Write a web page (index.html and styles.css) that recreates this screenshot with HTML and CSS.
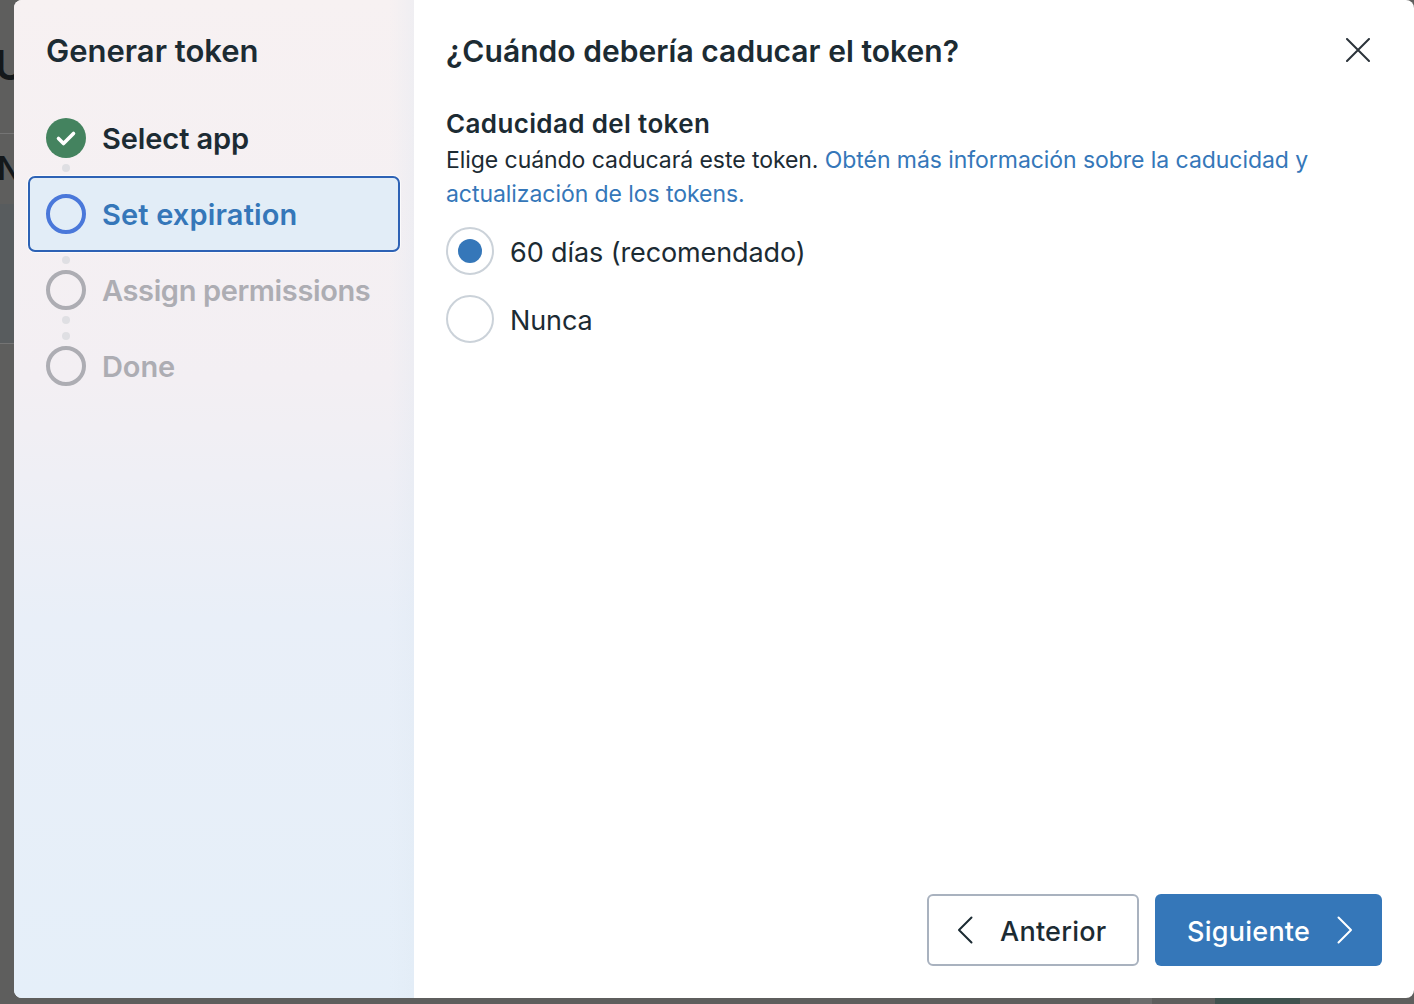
FILE: index.html
```html
<!DOCTYPE html>
<html lang="es">
<head>
<meta charset="utf-8">
<title>Generar token</title>
<link rel="stylesheet" href="styles.css">
</head>
<body>
<div class="backdrop">
  <span class="bg-band"></span>
  <span class="bg-letter bg-u">U</span>
  <span class="bg-letter bg-n">N</span>
  <span class="bg-line bg-line-1"></span>
  <span class="bg-line bg-line-3"></span>
  <span class="bg-patch bg-patch-1"></span>
  <span class="bg-patch bg-patch-2"></span>
</div>
<div class="modal">
  <aside class="side">
    <h2 class="side-title">Generar token</h2>
    <ol class="steps">
      <li class="step step-done">
        <svg class="step-icon" viewBox="0 0 40 40"><circle cx="20" cy="20" r="20" fill="#44835f"/><path d="M12.5 20.5l5 5 10-10" fill="none" stroke="#fff" stroke-width="3.6" stroke-linecap="round" stroke-linejoin="round"/></svg>
        <span>Select app</span>
        <i class="dot dot-after"></i>
      </li>
      <li class="step step-active">
        <span class="ring"></span>
        <span class="label-expiration">Set expiration</span>
      </li>
      <li class="step step-todo">
        <i class="dot dot-before"></i>
        <span class="ring"></span>
        <span class="label-assign">Assign permissions</span>
        <i class="dot dot-after"></i>
      </li>
      <li class="step step-todo">
        <i class="dot dot-before"></i>
        <span class="ring"></span>
        <span>Done</span>
      </li>
    </ol>
  </aside>
  <main class="main">
    <header class="main-head">
      <h1 class="main-title">¿Cuándo debería caducar el token?</h1>
      <svg class="close" viewBox="0 0 24 24"><path d="M1 1l22 22M23 1L1 23" fill="none" stroke="#2b333a" stroke-width="2" stroke-linecap="round"/></svg>
    </header>
    <section class="content">
      <h3 class="section-title">Caducidad del token</h3>
      <p class="section-text">Elige cuándo caducará este token. <a href="#">Obtén más información sobre la caducidad y actualización de los tokens.</a></p>
      <div class="radios">
        <label class="radio"><span class="radio-mark radio-on"></span><span class="radio-text">60 días (recomendado)</span></label>
        <label class="radio"><span class="radio-mark"></span><span class="radio-text">Nunca</span></label>
      </div>
    </section>
    <footer class="actions">
      <button class="btn btn-secondary"><svg class="chev" viewBox="0 0 16 28"><path d="M14.5 1.5L2 14l12.5 12.5" fill="none" stroke="currentColor" stroke-width="2" stroke-linecap="round" stroke-linejoin="round"/></svg><span>Anterior</span></button>
      <button class="btn btn-primary"><span>Siguiente</span><svg class="chev" viewBox="0 0 16 28"><path d="M1.5 1.5L14 14 1.5 26.5" fill="none" stroke="currentColor" stroke-width="2" stroke-linecap="round" stroke-linejoin="round"/></svg></button>
    </footer>
  </main>
</div>
</body>
</html>
```
FILE: styles.css
```css
* { box-sizing: border-box; }
html, body { margin: 0; height: 100%; overflow: hidden; }
body {
  background: #5e5e5d;
  font-family: Inter, "Noto Sans", "Liberation Sans", sans-serif;
  color: #1c2b33;
  position: relative;
  padding-left: 14px;
}
.backdrop { position: absolute; inset: 0; overflow: hidden; }
.bg-band { position: absolute; left: 0; top: 204px; width: 14px; height: 139px; background: #585c5e; }
.bg-letter { position: absolute; font-weight: 600; color: #14181b; }
.bg-u { left: -5px; top: 41px; font-size: 41px; line-height: 48px; }
.bg-n { left: -3px; top: 150px; font-size: 32px; line-height: 38px; }
.bg-line { position: absolute; left: 0; width: 14px; height: 1px; background: #747474; }
.bg-line-1 { top: 133px; }
.bg-line-3 { top: 343px; }
.bg-patch { position: absolute; top: 998px; height: 6px; }
.bg-patch-1 { left: 1130px; width: 22px; background: #6c6c6c; }
.bg-patch-2 { left: 1215px; width: 85px; background: #40524f; }
.modal {
  position: relative;
  display: flex;
  width: 1400px;
  height: 998px;
  background: #fff;
  border-radius: 8px;
  overflow: hidden;
}
.side {
  width: 400px;
  flex: none;
  padding: 0 14px;
  background:
    linear-gradient(90deg, rgba(225, 232, 242, 0) 94%, rgba(222, 232, 242, 0.3) 100%),
    linear-gradient(180deg, #f7f1f2 0%, #f3eff3 38%, #e9eff8 62%, #e5eff9 100%);
}
.side-title { margin: 34px 0 0 18px; font-size: 31px; line-height: 34px; font-weight: 600; letter-spacing: 0; }
.steps { list-style: none; margin: 32px 0 0; padding: 0; }
.step {
  position: relative;
  display: flex;
  align-items: center;
  gap: 16px;
  height: 76px;
  padding-left: 18px;
  font-size: 29px;
  font-weight: 600;
  letter-spacing: -0.1px;
}
.step-icon, .ring { width: 40px; height: 40px; flex: none; }
.ring { border-radius: 50%; border: 4px solid #adadb3; }
.step-active {
  background: #e2edf7;
  border: 2px solid #2d62b5;
  border-radius: 7px;
  box-shadow: 0 0 0 1px rgba(255, 255, 255, 0.7);
  padding-left: 16px;
  color: #3577b9;
}
.step-active .ring { border-color: #4a78da; }
.label-expiration { letter-spacing: 0.15px; }
.label-assign { letter-spacing: -0.37px; }
.step-todo { color: #adadb3; }
.dot { position: absolute; left: 34px; width: 8px; height: 8px; border-radius: 50%; background: #dfdfe3; }
.dot-after { bottom: 4px; }
.dot-before { top: 4px; }
.main { flex: 1; display: flex; flex-direction: column; padding: 0 32px 32px; min-width: 0; }
.main-head { display: flex; justify-content: space-between; align-items: flex-start; padding-top: 34px; }
.main-title { margin: 0; font-size: 30px; line-height: 34px; font-weight: 600; letter-spacing: 0.04px; }
.close { width: 24px; height: 24px; margin: 4px 12px 0 0; flex: none; }
.content { flex: 1; padding-top: 37px; }
.section-title { margin: 0; font-size: 26px; line-height: 38px; font-weight: 600; letter-spacing: 0.36px; }
.section-text { margin: 0; font-size: 23px; line-height: 34px; letter-spacing: -0.06px; max-width: 880px; }
.section-text a { color: #3577b9; text-decoration: none; }
.radios { margin-top: 16px; display: flex; flex-direction: column; gap: 20px; }
.radio { display: flex; align-items: center; gap: 16px; font-size: 27px; letter-spacing: -0.1px; height: 48px; }
.radio-text { padding-top: 2px; }
.radio-mark { width: 48px; height: 48px; border-radius: 50%; border: 2px solid #cbd2d9; flex: none; position: relative; background: #fff; }
.radio-on::after { content: ""; position: absolute; left: 10px; top: 10px; width: 24px; height: 24px; border-radius: 50%; background: #3577b9; }
.actions { display: flex; justify-content: flex-end; gap: 16px; }
.btn { height: 72px; border-radius: 6px; display: flex; align-items: center; font: inherit; font-size: 27px; font-weight: 500; letter-spacing: 0.25px; }
.btn span { padding-top: 2px; }
.btn-secondary { width: 212px; background: #fff; border: 2px solid #a9b2bf; color: #1c2b33; padding: 0 0 0 28px; gap: 27px; }
.btn-primary { width: 227px; background: #3577b9; border: 0; color: #fff; padding: 0 0 0 32px; gap: 27px; }
.chev { width: 16px; height: 28px; flex: none; }
```
